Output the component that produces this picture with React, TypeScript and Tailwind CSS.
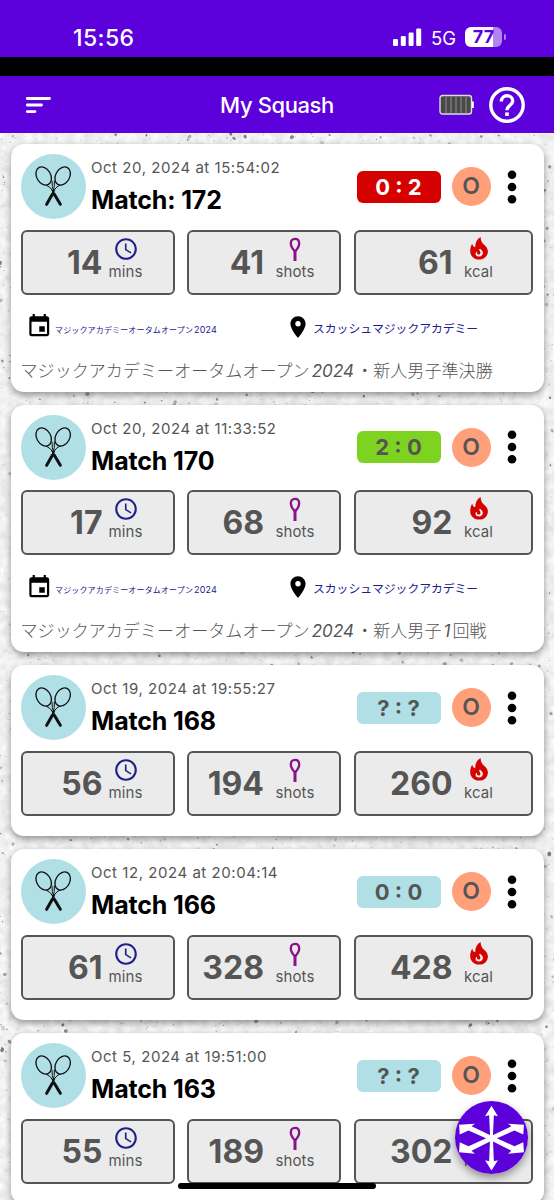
import { MdAccessTime, MdEvent, MdLocationOn } from "react-icons/md";

type Match = {
  date: string;
  title: string;
  score: string;
  scoreClass: string;
  mins: number;
  shots: number;
  kcal: number;
  event?: string;
  place?: string;
  note?: [string, string][];
};

const unplayed = "bg-[#b0e0e6] text-[#555]";

const matches: Match[] = [
  {
    date: "Oct 20, 2024 at 15:54:02",
    title: "Match: 172",
    score: "0 : 2",
    scoreClass: "bg-[#d50000] text-white",
    mins: 14,
    shots: 41,
    kcal: 61,
    event: "マジックアカデミーオータムオープン",
    place: "スカッシュマジックアカデミー",
    note: [["マジックアカデミーオータムオープン", "2024"], ["・新人男子準決勝", ""]],
  },
  {
    date: "Oct 20, 2024 at 11:33:52",
    title: "Match 170",
    score: "2 : 0",
    scoreClass: "bg-[#7ed321] text-[#555]",
    mins: 17,
    shots: 68,
    kcal: 92,
    event: "マジックアカデミーオータムオープン",
    place: "スカッシュマジックアカデミー",
    note: [["マジックアカデミーオータムオープン", "2024"], ["・新人男子", "1"], ["回戦", ""]],
  },
  { date: "Oct 19, 2024 at 19:55:27", title: "Match 168", score: "? : ?", scoreClass: unplayed, mins: 56, shots: 194, kcal: 260 },
  { date: "Oct 12, 2024 at 20:04:14", title: "Match 166", score: "0 : 0", scoreClass: unplayed, mins: 61, shots: 328, kcal: 428 },
  { date: "Oct 5, 2024 at 19:51:00", title: "Match 163", score: "? : ?", scoreClass: unplayed, mins: 55, shots: 189, kcal: 302 },
];

// small seeded generator so the specks stay put between renders
function makeSpecks(count: number) {
  let seed = 7;
  const next = () => {
    seed = (seed * 16807) % 2147483647;
    return seed / 2147483647;
  };
  return Array.from({ length: count }, () => ({
    x: next() * 554,
    y: next() * 1067,
    r: 0.4 + next() ** 5 * 1.6,
    stretch: 0.6 + next() * 0.9,
    angle: next() * 180,
    opacity: 0.15 + next() * 0.5,
  }));
}

const specks = makeSpecks(5200);

function Terrazzo() {
  return (
    <svg className="absolute inset-0" width="554" height="1067" viewBox="0 0 554 1067">
      <filter id="grain" x="0" y="0" width="100%" height="100%">
        <feTurbulence type="fractalNoise" baseFrequency="0.12" numOctaves="4" seed="4" />
        <feColorMatrix values="0.3 0 0 0 0.73  0.3 0 0 0 0.73  0.3 0 0 0 0.73  0 0 0 0 1" />
      </filter>
      <rect width="554" height="1067" filter="url(#grain)" />
      {specks.map((s, i) => (
        <ellipse
          key={i}
          cx={s.x}
          cy={s.y}
          rx={s.r}
          ry={s.r * s.stretch}
          transform={`rotate(${s.angle} ${s.x} ${s.y})`}
          fill="#333"
          opacity={s.opacity}
        />
      ))}
    </svg>
  );
}

function Rackets() {
  return (
    <svg className="h-[65px] w-[65px] shrink-0" viewBox="0 0 195 195">
      <circle cx="97.5" cy="97.5" r="97.5" fill="#b0e0e6" />
      <g fill="none" stroke="#111" strokeWidth="4">
        <ellipse cx="68" cy="66" rx="21" ry="29" transform="rotate(-30 68 66)" />
        <ellipse cx="125" cy="66" rx="21" ry="29" transform="rotate(30 125 66)" />
        <path d="M75 93Q90 98 99 118M93 80Q92 96 99 118M118 93Q103 98 95 118M100 80Q102 96 95 118" strokeWidth="3" />
        <path d="M94 108L102 124M100 108L92 124" strokeWidth="5" />
        <path d="M94 121L77 151M100 121L118 151" strokeWidth="9" strokeLinecap="round" />
      </g>
    </svg>
  );
}

function ShotIcon() {
  return (
    <svg className="h-[26px] w-[26px]" viewBox="0 0 26 26" fill="none" stroke="#8b128b">
      <path d="M13 15.4C10.2 12.5 8.8 9.8 8.8 7.5C8.8 4.5 10.4 2.9 13 2.9S17.2 4.5 17.2 7.5C17.2 9.8 15.8 12.5 13 15.4Z" strokeWidth="2.3" />
      <path d="M13 14V25" strokeWidth="3" />
    </svg>
  );
}

function FlameIcon() {
  return (
    <svg className="h-[26px] w-[26px]" viewBox="0 0 24 24" fill="#d50000">
      <path d="M13.5.9c.1 2.6.5 4.2 2.2 6.2C18.3 9.4 20.2 11 20.2 14.2C20.2 18.7 16.5 21.8 12 21.8S3.9 18.5 3.9 14C3.9 11.3 4.5 9 5.8 7.200C6 9 7 10.2 8.500 10.4C8.500 6 10 2.8 13.500.9ZM13 11.800C10.500 12.500 8.500 13.500 8.500 15.700C8.500 17.800 10 19 12 19S15.600 17.500 15.600 15.500C15.600 14 14.500 13.300 13 11.800Z" fillRule="evenodd" />
      <path d="M12.2 11C11.6 13.2 13.5 14 13.3 15.7C13.2 16.8 12.3 17.2 11.5 17.1C10.3 17 9.9 15.8 10.3 14.3C8.6 15.3 8.1 16.7 8.7 18L7 16L8.4 12Z" />
    </svg>
  );
}

function Stat({ value, unit, icon, box, num, label }: { value: number; unit: string; icon: React.ReactNode; box: string; num: string; label: string }) {
  return (
    <div className={`flex h-[65px] rounded-[6px] border-2 border-[#555] bg-[#ebebeb] ${box}`}>
      <div className={`pt-[12px] text-right text-[32px] leading-[38px] font-bold ${num}`}>{value}</div>
      <div className={`flex flex-col items-center pt-[4px] ${label}`}>
        {icon}
        <span className="pt-px text-[15px] leading-[18px] tracking-[0.1px]">{unit}</span>
      </div>
    </div>
  );
}

function MatchCard({ match }: { match: Match }) {
  return (
    <div className={`w-[533px] shrink-0 rounded-[13px] bg-white px-[10px] pt-[10px] text-[#555] shadow-[0_3px_7px_rgba(0,0,0,0.4)] ${match.event ? "h-[247.6px]" : "h-[171px]"}`}>
      <div className="flex h-[65px]">
        <Rackets />
        <div className="ml-[5.5px] flex-1 whitespace-nowrap">
          <div className="mt-[4px] text-[15px] leading-[20px] tracking-[0.54px]">{match.date}</div>
          <div className="mt-[7px] text-[25px] leading-[30px] font-bold tracking-[-0.15px] text-black">{match.title}</div>
        </div>
        <div className="flex h-[65px] items-center">
          <div className={`h-[32px] w-[84px] rounded-[6px] text-center text-[22px] leading-[32px] font-bold ${match.scoreClass}`}>{match.score}</div>
          <div className="ml-[11px] h-[39px] w-[39px] rounded-full bg-[#ffa07a] text-center text-[23px] leading-[39px] font-semibold">O</div>
          <svg className="mr-[17px] ml-[16px] h-[34px] w-[10px]" viewBox="0 0 10 34">
            <circle cx="5" cy="4.8" r="4.3" />
            <circle cx="5" cy="17" r="4.3" />
            <circle cx="5" cy="29.2" r="4.3" />
          </svg>
        </div>
      </div>
      <div className="mt-[10.5px] flex gap-[12.5px]">
        <Stat value={match.mins} unit="mins" icon={<MdAccessTime size={26} color="#20208c" />} box="w-[154px]" num="w-[80px]" label="w-[46px]" />
        <Stat value={match.shots} unit="shots" icon={<ShotIcon />} box="w-[154px]" num="w-[75px]" label="w-[62px]" />
        <Stat value={match.kcal} unit="kcal" icon={<FlameIcon />} box="w-[179.5px]" num="w-[97px]" label="w-[52px]" />
      </div>
      {match.event && (
        <>
          <div className="mt-[19px] flex h-[26px] items-center whitespace-nowrap text-[#20208c]">
            <MdEvent size={26.5} className="ml-[5px] shrink-0" color="#000" />
            <div className="ml-[3px] w-[230px] pt-[6px] text-[8px] leading-[12px] tracking-[0.15px]">
              {match.event}
              <span className="ml-[1px] text-[9px]">2024</span>
            </div>
            <MdLocationOn size={26} className="shrink-0" color="#000" />
            <div className="ml-[2px] pt-[4px] text-[11.8px] leading-[16px]">{match.place}</div>
          </div>
          <div className="mt-[20px] text-[17px] leading-[22px] font-light tracking-[0.07px] whitespace-nowrap">
            {match.note?.map(([text, num], i) => (
              <span key={i}>
                {text}
                {num && <i className="mx-[2px] font-normal">{num}</i>}
              </span>
            ))}
          </div>
        </>
      )}
    </div>
  );
}

function StatusBar() {
  return (
    <div className="flex h-[57px] items-start bg-[#5c00dc] text-white">
      <div className="ml-[73px] mt-[24px] w-[319px] text-[23px] leading-[28px] font-medium tracking-[0.4px]">15:56</div>
      <svg className="mt-[28px] h-[19px] w-[30px]" viewBox="0 0 30 19" fill="#fff">
        <rect x="1" y="11" width="5" height="7" rx="1.3" />
        <rect x="8.8" y="8" width="5" height="10" rx="1.3" />
        <rect x="16.6" y="4.5" width="5" height="13.5" rx="1.3" />
        <rect x="24.2" y="0.5" width="5" height="17.5" rx="1.3" />
      </svg>
      <div className="ml-[9px] mt-[24px] w-[34px] text-[18.5px] leading-[28px]">5G</div>
      <div className="mt-[27px] h-[20px] w-[37px] rounded-[6px] bg-[linear-gradient(90deg,#fff_76%,#b184ee_76%)] text-center text-[18px] leading-[20px] font-bold text-[#5c00dc]">77</div>
      <div className="mt-[34px] ml-[1.5px] h-[6px] w-[2px] rounded-r-full bg-[#b184ee]" />
    </div>
  );
}

function AppBar() {
  return (
    <div className="flex h-[57px] items-center bg-[#5c00dc] text-white">
      <svg className="ml-[25px] h-[18px] w-[28px]" viewBox="0 0 28 18" stroke="#fff" strokeWidth="2.8" strokeLinecap="round">
        <path d="M2.3 2.5H24.5M2.3 9H16.5M2.3 15.6H10" />
      </svg>
      <div className="flex-1 pl-[62px] text-center text-[22px] leading-[28px] font-medium tracking-[-0.4px]">My Squash</div>
      <svg className="h-[22px] w-[36px]" viewBox="0 0 36 22">
        <rect x="1" y="1.5" width="31.5" height="18.5" rx="2.5" fill="#484848" stroke="#ddd" strokeWidth="1.4" />
        <path d="M33 7.5h1.8v6.5h-1.8z" fill="#fff" />
        <path d="M7 3v16M12 3v16M17 3v16M22 3v16M27 3v16" stroke="#999" strokeWidth="0.9" />
      </svg>
      <svg className="mr-[29.5px] ml-[13.5px] h-[36px] w-[36px]" viewBox="0 0 36 36" fill="none" stroke="#fff" strokeWidth="3.4">
        <circle cx="18" cy="18" r="16.2" />
        <path d="M12.3 14.6C12.3 11 14.8 8.8 18 8.8S23.7 11 23.7 14C23.7 18.2 18 18.4 18 23.2" />
        <path d="M18 25.4v3.5" strokeWidth="3.7" />
      </svg>
    </div>
  );
}

function ArrowsIcon() {
  return (
    <svg className="h-[73px] w-[73px]" viewBox="0 0 216 216" fill="#fff">
      <circle cx="108" cy="108" r="108" fill="#5c00dc" />
      <path d="M108 14L127 45L115 42L112 106H104L101 42L89 45Z" />
      <path d="M108 206L127 175L115 178L112 106H104L101 178L89 175Z" />
      <path d="M12 70L59 67L49 75L111 104L105 116L40 87L14 99Z" />
      <path d="M204 70L157 67L167 75L105 104L111 116L176 87L202 99Z" />
      <path d="M12 152L59 156L49 147L111 116L105 104L40 134L14 122Z" />
      <path d="M204 152L157 156L167 147L105 116L111 104L176 134L202 122Z" />
    </svg>
  );
}

export default function App() {
  return (
    <div className="relative flex h-[1200px] w-[554px] flex-col overflow-hidden bg-black font-['Inter','Noto_Sans_CJK_JP',sans-serif]">
      <StatusBar />
      <div className="h-[19px]" />
      <AppBar />
      <div className="relative h-[1067px] overflow-hidden bg-[#e8e8e8]">
        <Terrazzo />
        <div className="relative flex flex-col gap-[13px] pt-[11px] pl-[10.5px]">
          {matches.map((match) => (
            <MatchCard key={match.title} match={match} />
          ))}
        </div>
      </div>
      <div className="absolute top-[1101px] left-[455px] rounded-full shadow-[0_4px_9px_rgba(0,0,0,0.4)]">
        <ArrowsIcon />
      </div>
      <div className="absolute top-[1183px] left-[178px] h-[6px] w-[198px] rounded-full bg-black" />
    </div>
  );
}
